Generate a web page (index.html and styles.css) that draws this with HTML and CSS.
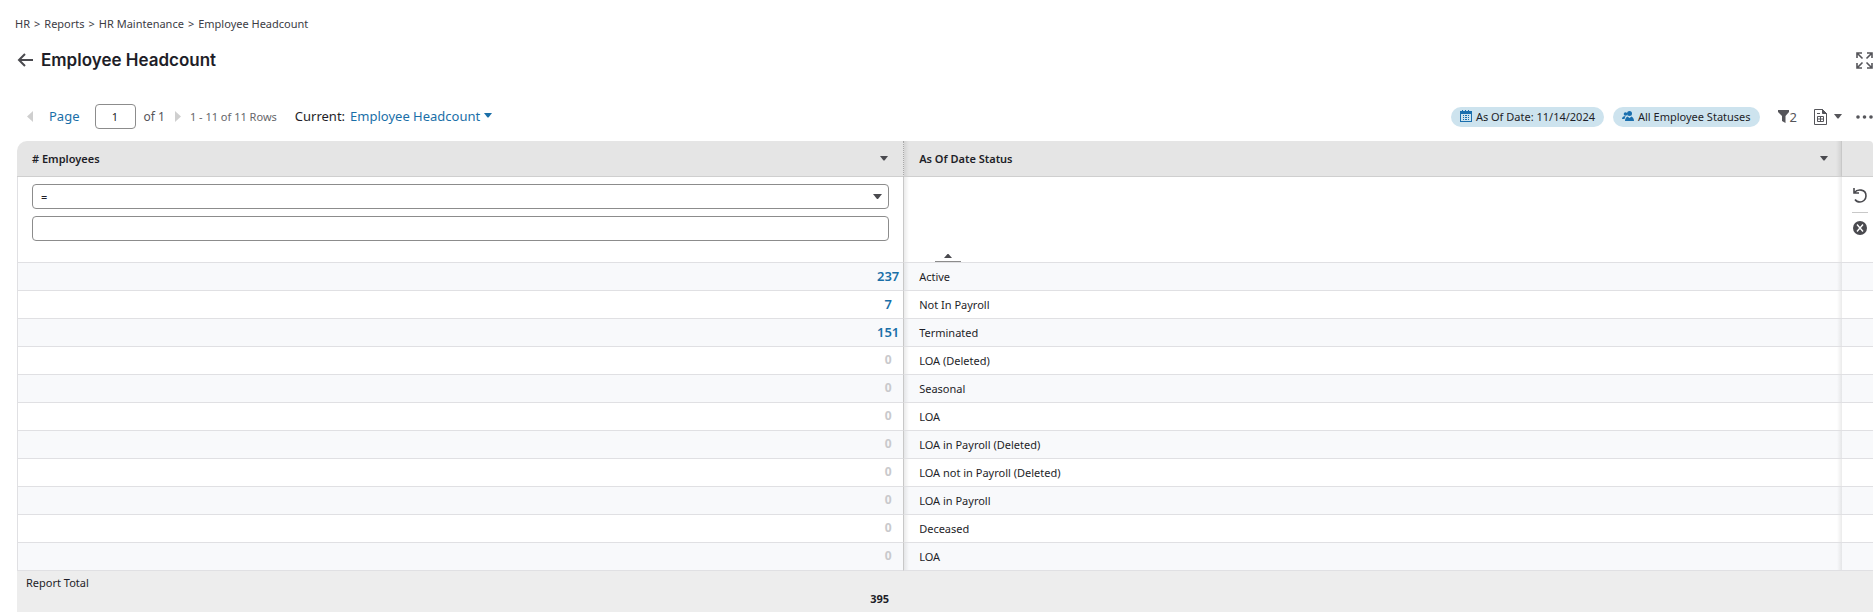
FILE: index.html
```html
<!DOCTYPE html>
<html lang="en">
<head>
<meta charset="utf-8">
<title>Employee Headcount</title>
<link rel="stylesheet" href="styles.css">
</head>
<body>
<nav class="crumbs" aria-label="Breadcrumb">
  <a href="#">HR</a><span>&gt;</span><a href="#">Reports</a><span>&gt;</span><a href="#">HR Maintenance</a><span>&gt;</span><a href="#">Employee Headcount</a>
</nav>
<header class="title-bar">
  <button class="icon-btn" aria-label="Back">
    <svg width="16" height="14" viewBox="0 0 16 14" fill="none" stroke="#4a4a4f" stroke-width="2"><path d="M16 7H2M8 1L2 7l6 6"/></svg>
  </button>
  <h1>Employee Headcount</h1>
  <button class="icon-btn push" aria-label="Full screen">
    <svg width="17" height="17" viewBox="0 0 17 17" fill="none" stroke="#55555a" stroke-width="1.600"><path d="M1 6V1h5M11 1h5v5M16 11v5h-5M6 16H1v-5M1 1l5.500 5.500M16 1l-5.500 5.500M1 16l5.500-5.500M16 16l-5.500-5.500"/></svg>
  </button>
</header>
<div class="toolbar">
  <button class="icon-btn" aria-label="Previous page"><svg width="6" height="11" viewBox="0 0 6 11" fill="#cfcfcf"><path d="M6 0v11L0 5.500z"/></svg></button>
  <label class="page-label" for="page">Page</label>
  <input class="page-input" id="page" type="text" value="1">
  <span class="of">of 1</span>
  <button class="icon-btn next" aria-label="Next page"><svg width="6" height="11" viewBox="0 0 6 11" fill="#cfcfcf"><path d="M0 0v11l6-5.500z"/></svg></button>
  <span class="rows">1 - 11 of 11 Rows</span>
  <span class="current">Current:</span>
  <button class="view-btn">Employee Headcount
    <svg width="8" height="5" viewBox="0 0 8 5" fill="#1a6fa8"><path d="M0 0h8L4.500 4.500h-1z"/></svg>
  </button>
  <div class="tools">
    <button class="chip">
      <svg width="12" height="14" viewBox="0 0 12 14"><path fill="#1a6fae" d="M0 1h2V0h1v1h2V0h1v1h2V0h1v1h3v11H0z"/><path fill="#cde3ee" d="M1 4h10v7H1z"/><path fill="#1a6fae" d="M3 5h1v1H3zM5 5h2v1H5zM8 5h1v1H8zM3 7h1v1H3zM5 7h2v1H5zM8 7h1v1H8zM3 9h1v1H3zM5 9h2v1H5zM8 9h1v1H8z"/></svg>
      As Of Date: 11/14/2024
    </button>
    <button class="chip">
      <svg width="12" height="14" viewBox="0 0 12 14" fill="#1a6fae"><circle cx="3.500" cy="4" r="1.800"/><path d="M0 9c0-2 1.500-3 3.500-3L2.500 9z"/><circle cx="7.500" cy="3.500" r="2.500"/><path d="M3 11c0-2.500 1-3.500 2.500-4.500l2 1.500 2-1.500C11 7.500 12 8.500 12 11z"/></svg>
      All Employee Statuses
    </button>
    <button class="filter-btn" aria-label="2 filters">
      <svg width="11" height="13" viewBox="0 0 11 13" fill="#55555a"><path d="M0 0h11v2L7.500 6v7L4 11V6L0 2z"/></svg><span>2</span>
    </button>
    <button class="icon-btn doc" aria-label="Export">
      <svg width="13" height="16" viewBox="0 0 13 16" fill="none" stroke="#55555a"><path d="M.5 .5h8l4 4v11H.5z"/><path fill="#55555a" d="M8.500 .5v4h4z"/><path d="M3 4.500h3M3.500 7.500h6v5h-6zM3.500 10h6M6.500 7.500v5"/></svg>
      <svg width="8" height="5" viewBox="0 0 8 5" fill="#55555a"><path d="M0 0h8L4.500 4.500h-1z"/></svg>
    </button>
    <button class="icon-btn more" aria-label="More">
      <svg width="17" height="4" viewBox="0 0 17 4" fill="#55555a"><circle cx="2" cy="2" r="1.800"/><circle cx="8.500" cy="2" r="1.800"/><circle cx="15" cy="2" r="1.800"/></svg>
    </button>
  </div>
</div>
<main class="grid">
<table>
  <colgroup><col class="c-count"><col><col class="c-tools"></colgroup>
  <thead>
    <tr>
      <th class="count"><div class="head"># Employees<button class="icon-btn" aria-label="Employees column menu"><svg width="8" height="5" viewBox="0 0 8 5" fill="#4a4a4f"><path d="M0 0h8L4.500 4.500h-1z"/></svg></button></div></th>
      <th class="status"><div class="head">As Of Date Status<button class="icon-btn" aria-label="Status column menu"><svg width="8" height="5" viewBox="0 0 8 5" fill="#4a4a4f"><path d="M0 0h8L4.500 4.500h-1z"/></svg></button></div></th>
      <th class="last"></th>
    </tr>
  </thead>
  <tbody>
    <tr class="filters">
      <td class="count"><div class="fields">
        <div class="select"><select aria-label="Comparison"><option>=</option></select><svg width="9" height="5" viewBox="0 0 9 5" fill="#4a4a4f"><path d="M0 0h9L5 5H4z"/></svg></div>
        <input type="text" aria-label="Number of employees">
      </div></td>
      <td class="status"><button class="collapse" aria-label="Collapse filters"><svg width="8" height="4" viewBox="0 0 8 4" fill="#4a4a4f"><path d="M0 4h8L4.500 0h-1z"/></svg></button></td>
      <td class="last"><div class="side">
        <button class="icon-btn" aria-label="Undo"><svg width="14" height="15" viewBox="0 0 14 15" fill="none" stroke="#4a4a4f" stroke-width="1.600"><path d="M1.500 4.500C4 1 13 .5 13 8c0 4-3.500 6-6 6-2.500 0-4-1-5-2.500M1 0v5h5"/></svg></button>
        <button class="icon-btn clear" aria-label="Clear"><svg width="14" height="14" viewBox="0 0 14 14"><circle cx="7" cy="7" r="7" fill="#4a4a4f"/><path d="M4 3.500l6 7M10 3.500l-6 7" stroke="#fff" stroke-width="1.400"/></svg></button>
      </div></td>
    </tr>
    <tr><td class="count"><a href="#">237</a></td><td class="status">Active</td><td class="last"></td></tr>
    <tr><td class="count"><a href="#">7</a></td><td class="status">Not In Payroll</td><td class="last"></td></tr>
    <tr><td class="count"><a href="#">151</a></td><td class="status">Terminated</td><td class="last"></td></tr>
    <tr><td class="count"><span class="zero">0</span></td><td class="status">LOA (Deleted)</td><td class="last"></td></tr>
    <tr><td class="count"><span class="zero">0</span></td><td class="status">Seasonal</td><td class="last"></td></tr>
    <tr><td class="count"><span class="zero">0</span></td><td class="status">LOA</td><td class="last"></td></tr>
    <tr><td class="count"><span class="zero">0</span></td><td class="status">LOA in Payroll (Deleted)</td><td class="last"></td></tr>
    <tr><td class="count"><span class="zero">0</span></td><td class="status">LOA not in Payroll (Deleted)</td><td class="last"></td></tr>
    <tr><td class="count"><span class="zero">0</span></td><td class="status">LOA in Payroll</td><td class="last"></td></tr>
    <tr><td class="count"><span class="zero">0</span></td><td class="status">Deceased</td><td class="last"></td></tr>
    <tr><td class="count"><span class="zero">0</span></td><td class="status">LOA</td><td class="last"></td></tr>
  </tbody>
  <tfoot>
    <tr><td><div class="total"><span>Report Total</span><strong>395</strong></div></td><td></td><td></td></tr>
  </tfoot>
</table>
</main>
</body>
</html>
```
FILE: styles.css
```css
* { box-sizing: border-box; }
body {
  margin: 0;
  padding: 16px 0 4px 17px;
  background: #fff;
  color: #1e1e28;
  font: 11px/16px "Noto Sans", sans-serif;
}
button, input, select { font: inherit; color: inherit; }
button { padding: 0; border: 0; background: none; }
svg { display: block; flex: none; }
a { text-decoration: none; }
.icon-btn { display: flex; align-items: center; }

.crumbs { display: flex; gap: 4px; margin-left: -2px; color: #3c3c44; }
.crumbs a { color: inherit; }

.title-bar { display: flex; align-items: center; gap: 8px; height: 24px; margin-top: 16px; }
h1 { margin: 0; font: 600 17px/24px Inter, sans-serif; color: #1e1e28; }
.push { margin-left: auto; }

.toolbar { display: flex; align-items: center; height: 25px; margin-top: 32px; padding-left: 10px; white-space: nowrap; }
.page-label { margin-left: 16px; padding-bottom: 2px; font-size: 13px; color: #1a6fa8; }
.page-input { width: 41px; height: 25px; margin-left: 15px; padding: 0; border: 1px solid #8c8c8c; border-radius: 4px; text-align: center; }
.of { margin-left: 8px; font-size: 12px; color: #55555a; }
.next { margin-left: 10px; }
.rows { margin-left: 9px; color: #66666a; }
.current { margin-left: 18px; padding-bottom: 2px; font-size: 13px; }
.view-btn { display: flex; align-items: center; gap: 4px; margin-left: 5px; padding-bottom: 2px; font-size: 13px; color: #1a6fa8; }
.tools { display: flex; align-items: center; margin-left: auto; }
.chip { display: flex; align-items: center; gap: 4px; height: 20px; margin-right: 9px; padding: 0 9px; border-radius: 10px; background: #cde3ee; font-size: 11px; }
.filter-btn { display: flex; align-items: center; gap: 1px; margin-left: 9px; font-size: 13px; color: #55555a; }
.doc { gap: 7px; margin-left: 17px; }
.more { margin-left: 14px; }

.grid { margin-top: 12px; }
table { width: 100%; table-layout: fixed; border-collapse: separate; border-spacing: 0; border-radius: 10px 4px 0 0; overflow: hidden; }
.c-count { width: 47.8%; }
.c-tools { width: 31px; }
th, td { padding: 0; text-align: left; vertical-align: middle; }
th { height: 36px; background: #e5e5e5; border-bottom: 1px solid #cfcfcf; font-weight: 600; }
.count { border-right: 1px solid #c8c8c8; }
th.count { border-right-style: dotted; border-right-color: #a8a8a8; }
td.count { border-left: 1px solid #e0e0e3; text-align: right; }
.status { padding-left: 15px; background-image: linear-gradient(to right, #00000014, #00000000), linear-gradient(to left, #00000014, #00000000); background-size: 5px 100%; background-position: left, right; background-repeat: no-repeat; }
th.status { border-right: 1px solid #c8c8c8; }
.head { display: flex; align-items: center; justify-content: space-between; padding: 0 15px; }
.status .head { padding: 0 13px 0 0; }
tbody tr { background-color: #fff; }
tbody tr:nth-child(even) { background-color: #f8f9fb; }
tbody td { height: 28px; border-bottom: 1px solid #e0e0e3; }
.filters td { height: 86px; vertical-align: top; }
.fields { display: grid; gap: 7px; padding: 7px 14px; }
.select { position: relative; display: grid; }
.select svg { position: absolute; right: 7px; top: 10px; }
.fields select, .fields input { width: 100%; height: 25px; padding: 0 8px; border: 1px solid #8c8c8c; border-radius: 4px; background: #fff; appearance: none; }
.filters td.status { vertical-align: bottom; }
.collapse { display: flex; justify-content: center; width: 26px; height: 8px; margin-left: 16px; border-bottom: 1px solid #8c8c8c; }
.side { display: grid; width: 16px; margin-left: 10px; padding-top: 11px; }
.side .icon-btn { justify-content: center; height: 24px; align-items: flex-start; }
.side .clear { height: 32px; padding-top: 8px; border-top: 1px solid #c8c8c8; }
.count a, .zero { display: inline-block; width: 30px; padding-bottom: 2px; text-align: center; font-size: 13px; font-weight: 600; color: #1a6fa8; }
.count .zero { font-size: 12px; font-weight: 700; color: #c9c9cc; }
tfoot td { height: 41px; background: #ededed; vertical-align: top; }
.total { display: grid; padding: 4px 15px 5px 9px; }
.total strong { text-align: right; }
```
